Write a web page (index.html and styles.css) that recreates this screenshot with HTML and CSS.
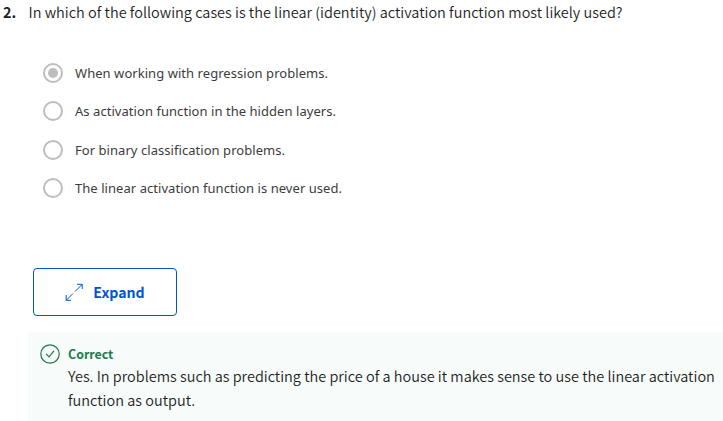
FILE: index.html
```html
<!DOCTYPE html>
<html lang="en">
<head>
<meta charset="utf-8">
<title>Quiz</title>
<link rel="stylesheet" href="styles.css">
</head>
<body>
<main class="quiz">
  <h1 class="question"><b class="number">2.</b><span>In which of the following cases is the linear (identity) activation function most likely used?</span></h1>
  <div class="options">
    <div class="option"><i class="radio checked"></i><span>When working with regression problems.</span></div>
    <div class="option"><i class="radio"></i><span>As activation function in the hidden layers.</span></div>
    <div class="option"><i class="radio"></i><span>For binary classification problems.</span></div>
    <div class="option"><i class="radio"></i><span>The linear activation function is never used.</span></div>
  </div>
  <button class="expand" type="button">
    <svg width="18" height="18" viewBox="0 0 18 18" fill="none" stroke="currentColor"><path d="M12 1.3h5.2V6M17 1.5L10 8.5M8 10.5l-7 7M1.2 12v5.3H6"/></svg>
    <span>Expand</span>
  </button>
  <section class="feedback">
    <svg width="20" height="20" viewBox="0 0 20 20" fill="none" stroke="currentColor" stroke-width="1.2"><circle cx="10" cy="10" r="9.2"/><path d="M6 9.8l3 3 5-6"/></svg>
    <div class="body">
      <strong class="verdict">Correct</strong>
      <p class="explain">Yes. In problems such as predicting the price of a house it makes sense to use the linear activation<br>function as output.</p>
    </div>
  </section>
</main>
</body>
</html>
```

FILE: styles.css
```css
* { box-sizing: border-box; }
body {
  margin: 0;
  background: #fff;
  color: #1f1f1f;
  font-family: "Noto Sans CJK SC", sans-serif;
}
.quiz { width: 723px; height: 421px; overflow: hidden; }
.question {
  display: flex;
  margin: 0;
  padding-left: 3px;
  height: 54px;
  font-size: 14.49px;
  font-weight: 350;
  line-height: 24px;
  white-space: nowrap;
}
.number { width: 25.5px; font-weight: 700; }
.options { height: 214px; padding-left: 43px; }
.option {
  display: flex;
  align-items: center;
  gap: 12px;
  height: 38.25px;
  font-family: "Noto Sans", sans-serif;
  font-size: 13px;
  letter-spacing: .05px;
  color: #3c3c3c;
  white-space: nowrap;
}
.radio {
  display: grid;
  place-items: center;
  width: 20px;
  height: 20px;
  border: 2px solid #bdbdbd;
  border-radius: 50%;
}
.checked::after {
  content: "";
  width: 10px;
  height: 10px;
  border-radius: 50%;
  background: #bdbdbd;
}
.expand {
  display: flex;
  align-items: center;
  justify-content: center;
  gap: 10px;
  width: 144px;
  height: 48px;
  margin: 0 0 16px 33px;
  border: 1px solid #0056d2;
  border-radius: 4px;
  background: #fff;
  color: #0056d2;
  font: 700 14.1px/20px "Noto Sans CJK SC", sans-serif;
}
.feedback {
  display: flex;
  gap: 8px;
  height: 89px;
  margin-left: 28px;
  padding: 12px 0 0 12px;
  background: #f7fbf9;
  color: #1d7c50;
}
.verdict { display: block; font-size: 12.4px; line-height: 20px; }
.explain {
  margin: 0;
  color: #1f1f1f;
  font-size: 14.49px;
  font-weight: 350;
  line-height: 24px;
  white-space: nowrap;
}
```
